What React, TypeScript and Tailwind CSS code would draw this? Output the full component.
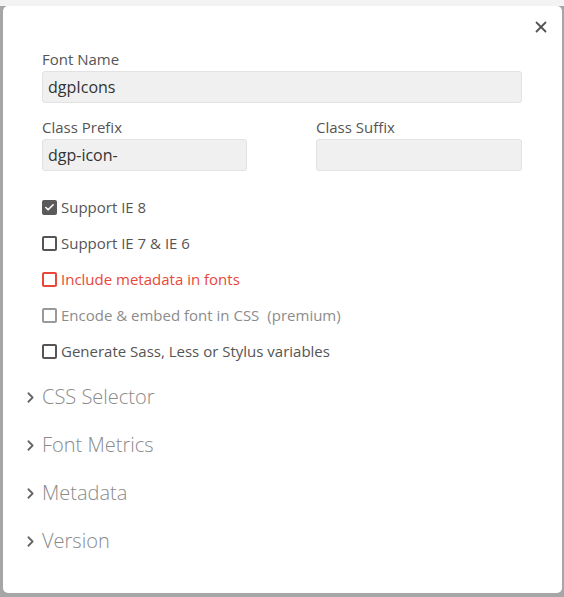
import { ChevronRight, X, Check } from "lucide-react";

const font = { fontFamily: '"Open Sans", "Noto Sans", sans-serif' };

function Field({ label, value, width }: { label: string; value?: string; width: string }) {
  return (
    <div className={`flex flex-col ${width}`}>
      <label className="text-[15px] leading-[20px] text-[#555]">{label}</label>
      <div className="mt-[2px] h-[32px] rounded-[3px] border border-[#e2e2e2] bg-[#f0f0f0] px-[5px] text-[16px] leading-[30px] text-[#333]">
        {value}
      </div>
    </div>
  );
}

function Option({
  label,
  checked,
  tone = "normal",
  extra,
}: {
  label: string;
  checked?: boolean;
  tone?: "normal" | "error" | "muted";
  extra?: string;
}) {
  const text =
    tone === "error" ? "text-[#e8473a]" : tone === "muted" ? "text-[#8c8c8c]" : "text-[#555]";
  const box =
    tone === "error" ? "border-[#e8473a]" : tone === "muted" ? "border-[#999]" : "border-[#555]";
  return (
    <div className="flex h-[36px] items-center">
      {checked ? (
        <span className="flex h-[15px] w-[15px] items-center justify-center rounded-[2px] bg-[#5a5a5a]">
          <Check size={11} strokeWidth={3.5} className="text-white" />
        </span>
      ) : (
        <span className={`h-[15px] w-[15px] rounded-[2px] border-2 ${box}`} />
      )}
      <span className={`ml-[4px] text-[15px] ${text}`}>
        {label}
        {extra && <span className="ml-[8px]">{extra}</span>}
      </span>
    </div>
  );
}

function Section({ title }: { title: string }) {
  return (
    <div className="flex h-[48px] items-center">
      <ChevronRight size={17} strokeWidth={2.5} className="ml-[-20px] mr-[3px] text-[#666]" />
      <span className="text-[20px] font-light text-[#8a8a8a]">{title}</span>
    </div>
  );
}

export default function App() {
  return (
    <div className="relative h-[597px] w-[564px] overflow-hidden bg-[#a6a6a6]" style={font}>
      <div className="h-[6px] bg-[#f3f3f3]" />
      <div className="ml-[3px] h-[587px] w-[559px] rounded-[5px] bg-white">
        <button className="absolute right-[14px] top-[18px] text-[#555]">
          <X size={18} strokeWidth={2.4} />
        </button>
        <div className="pl-[39px] pt-[43px]">
          <Field label="Font Name" value="dgpIcons" width="w-[480px]" />
          <div className="mt-[14px] flex gap-[69px]">
            <Field label="Class Prefix" value="dgp-icon-" width="w-[205px]" />
            <Field label="Class Suffix" width="w-[206px]" />
          </div>
          <div className="mt-[18px] flex flex-col">
            <Option label="Support IE 8" checked />
            <Option label="Support IE 7 & IE 6" />
            <Option label="Include metadata in fonts" tone="error" />
            <Option label="Encode & embed font in CSS" tone="muted" extra="(premium)" />
            <Option label="Generate Sass, Less or Stylus variables" />
          </div>
          <div className="mt-[4px] flex flex-col">
            <Section title="CSS Selector" />
            <Section title="Font Metrics" />
            <Section title="Metadata" />
            <Section title="Version" />
          </div>
        </div>
      </div>
    </div>
  );
}
